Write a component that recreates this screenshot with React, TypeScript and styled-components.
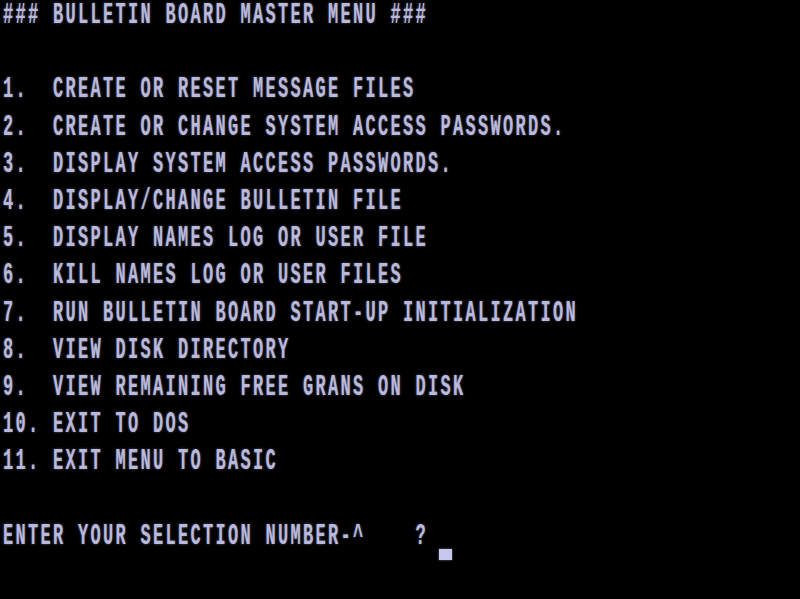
import React from "react";
import styled, { createGlobalStyle } from "styled-components";

const Global = createGlobalStyle`
  html, body { margin: 0; padding: 0; background: #000; }
  body { width: 800px; height: 599px; overflow: hidden; }
`;

const Screen = styled.div`
  width: 800px;
  height: 599px;
  background: #000;
  display: flex;
  flex-direction: column;
  padding: 1px 0 0 3px;
  box-sizing: border-box;
  color: #c8c8ee;
  font-family: "Liberation Mono", "Courier New", monospace;
  font-weight: bold;
  font-size: 17px;
  letter-spacing: 2.3px;
`;

const Row = styled.div`
  height: 37.2px;
  flex: 0 0 37.2px;
  display: flex;
  align-items: flex-start;
`;

const Text = styled.span`
  display: inline-block;
  white-space: pre;
  line-height: 17px;
  transform: scaleY(1.72);
  transform-origin: 0 0;
  opacity: 0.93;
  text-shadow: 0 0 2px rgba(200, 200, 245, 0.5);
`;

const Cursor = styled.span`
  display: inline-block;
  width: 13px;
  height: 11px;
  margin-top: 27px;
  margin-left: -2px;
  background: #c8c8ee;
  box-shadow: 0 0 2px rgba(200, 200, 245, 0.6);
`;

const lines = [
  "### BULLETIN BOARD MASTER MENU ###",
  "",
  "1.  CREATE OR RESET MESSAGE FILES",
  "2.  CREATE OR CHANGE SYSTEM ACCESS PASSWORDS.",
  "3.  DISPLAY SYSTEM ACCESS PASSWORDS.",
  "4.  DISPLAY/CHANGE BULLETIN FILE",
  "5.  DISPLAY NAMES LOG OR USER FILE",
  "6.  KILL NAMES LOG OR USER FILES",
  "7.  RUN BULLETIN BOARD START-UP INITIALIZATION",
  "8.  VIEW DISK DIRECTORY",
  "9.  VIEW REMAINING FREE GRANS ON DISK",
  "10. EXIT TO DOS",
  "11. EXIT MENU TO BASIC",
  "",
];

export default function App() {
  return (
    <>
      <Global />
      <Screen>
        {lines.map((l, i) => (
          <Row key={i}>
            <Text>{l || " "}</Text>
          </Row>
        ))}
        <Row>
          <Text>{"ENTER YOUR SELECTION NUMBER-^    ? "}</Text>
          <Cursor />
        </Row>
      </Screen>
    </>
  );
}
